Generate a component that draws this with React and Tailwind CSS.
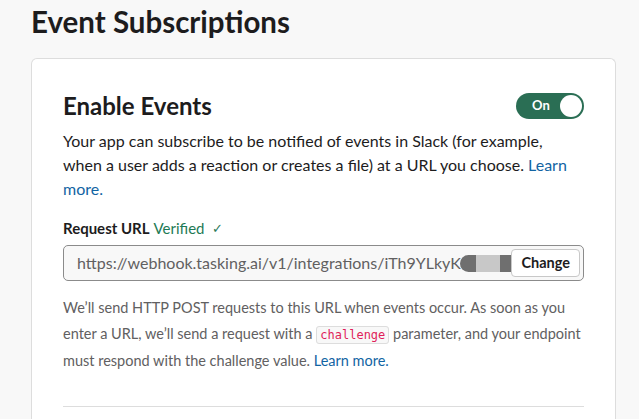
import React from 'react';

const Toggle = () => (
  <div className="flex h-[26px] w-[68px] items-center justify-between rounded-full bg-[#2a6e54] pl-[16px] pr-[2px]">
    <span className="text-[13px] font-bold text-white">On</span>
    <span className="h-[22px] w-[22px] rounded-full bg-white" />
  </div>
);

export default function App() {
  return (
    <div className="min-h-[419px] bg-[#f8f8f8] pl-[31px] pr-[23px] pt-[4px] font-['Lato',sans-serif] text-[#1d1c1d]">
      <h1 className="text-[29.5px] font-bold leading-[36px]">Event Subscriptions</h1>

      <div className="mt-[18px] rounded-t-[6px] border border-b-0 border-[#dddddd] bg-white px-[31px] pt-[32px] pb-[20px]">
        <div className="flex items-center justify-between">
          <h2 className="text-[24px] font-bold leading-[30px]">Enable Events</h2>
          <Toggle />
        </div>
        <p className="mt-[8px] text-[16px] leading-[24px]">
          Your app can subscribe to be notified of events in Slack (for example, when a user adds a reaction or creates a file) at a URL you choose.{' '}
          <a className="text-[#1264a3]">Learn more.</a>
        </p>

        <div className="mt-[16px] flex items-center gap-[6px] text-[15px] leading-[22px]">
          <span className="font-bold">Request URL</span>
          <span className="-ml-[2px] text-[#1e7a55]">Verified</span>
          <span className="ml-[2px] text-[13px] text-[#2a7a5a]">✓</span>
        </div>

        <div className="mt-[6px] flex h-[36px] items-center rounded-[5px] border border-[#8b8b8b] bg-[#f8f8f8] pl-[13px] pr-[3px]">
          <div className="flex min-w-0 flex-1 items-center overflow-hidden">
            <span className="whitespace-nowrap text-[16px] text-[#616061]">
              https://webhook.tasking.ai/v1/integrations/iTh9YLkyK
            </span>
            <div className="-ml-[1px] flex h-[17px] w-[60px] shrink-0 items-stretch">
              <span className="w-[16px] rounded-l-[9px] bg-[#6f6f6f]" />
              <span className="w-[24px] bg-[#c8c8c8]" />
              <span className="w-[20px] rounded-r-[9px] bg-[#6f6f6f]" />
            </div>
          </div>
          <button className="relative -ml-[6px] h-[28px] rounded-[4px] border border-[#c8c8c8] bg-white px-[9px] text-[14.5px] font-bold text-[#1d1c1d]">
            Change
          </button>
        </div>

        <p className="mt-[14px] text-[14.5px] leading-[26px] text-[#616061]">
          We’ll send HTTP POST requests to this URL when events occur. As soon as you enter a URL, we’ll send a request with a{' '}
          <code className="rounded-[3px] border border-[#dddddd] bg-[#f8f8f8] px-[3px] py-[1px] font-['DejaVu_Sans_Mono',monospace] text-[12px] text-[#e01e5a]">
            challenge
          </code>{' '}
          parameter, and your endpoint must respond with the challenge value.{' '}
          <a className="text-[#1264a3]">Learn more.</a>
        </p>

        <div className="mt-[32px] border-t border-[#dddddd]" />
        <div className="h-[40px]" />
      </div>
    </div>
  );
}
